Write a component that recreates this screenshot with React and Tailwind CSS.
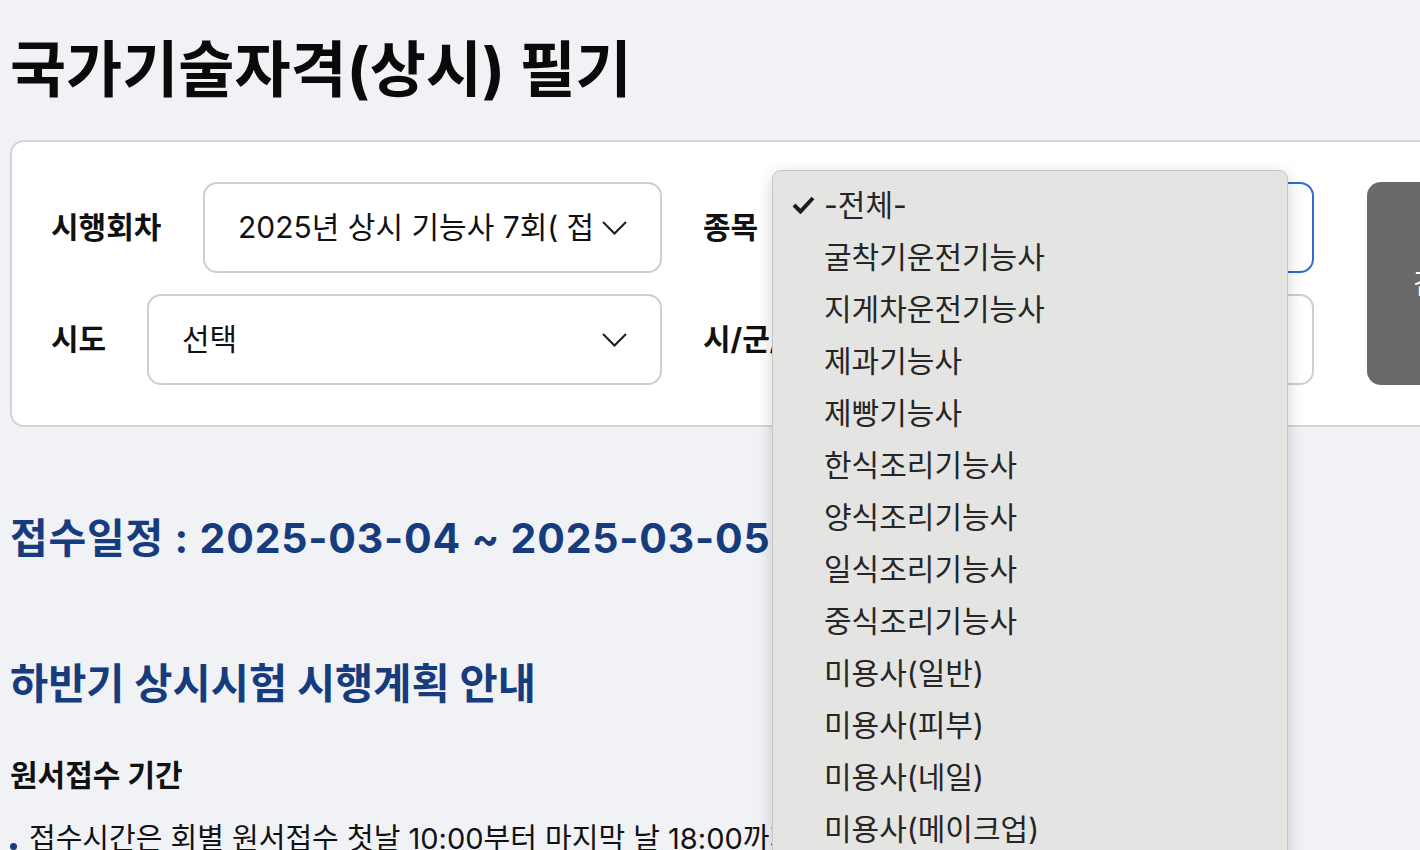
import React from 'react';

const font = { fontFamily: 'Inter, "Noto Sans CJK KR", "Noto Sans", sans-serif' };

const Chevron = () => (
  <svg width="25" height="14" viewBox="0 0 25 14" fill="none" className="shrink-0">
    <polyline points="1,1 12.5,12.5 24,1" stroke="#1a1a1a" strokeWidth="2" />
  </svg>
);

const Check = () => (
  <svg width="23" height="18" viewBox="0 0 23 18" fill="none">
    <polyline points="2,9 8.5,15.5 21,2" stroke="#1c1c1c" strokeWidth="4" strokeLinejoin="miter" />
  </svg>
);

const SelectBox = ({ value, focused }) => (
  <div
    className={`flex-1 h-[91px] flex items-center justify-between pl-[33px] pr-[33px] bg-white rounded-[14px] border-2 ${
      focused ? 'border-[#2a6ed6]' : 'border-[#cfcfcf]'
    }`}
  >
    <span className="text-[30px] text-[#111] whitespace-nowrap overflow-hidden">{value}</span>
    <Chevron />
  </div>
);

const Field = ({ label, value, focused, labelW }) => (
  <div className="w-[611px] flex items-center">
    <span className={`text-[30px] font-bold text-[#111] whitespace-nowrap ${labelW}`}>{label}</span>
    <SelectBox value={value} focused={focused} />
  </div>
);

const options = [
  '-전체-',
  '굴착기운전기능사',
  '지게차운전기능사',
  '제과기능사',
  '제빵기능사',
  '한식조리기능사',
  '양식조리기능사',
  '일식조리기능사',
  '중식조리기능사',
  '미용사(일반)',
  '미용사(피부)',
  '미용사(네일)',
  '미용사(메이크업)',
  '이용사',
];

export default function App() {
  return (
    <div className="relative w-[1420px] h-[850px] overflow-hidden bg-[#f1f2f6]" style={font}>
      <div className="pl-[10px] pt-[30px]">
        <h1 className="text-[61px] leading-[80px] font-bold text-[#0a0a0a] whitespace-nowrap">
          국가기술자격(상시) 필기
        </h1>

        <div className="mt-[30px] w-[1600px] bg-white border-2 border-[#d4d4d8] rounded-[14px] pl-[39px] py-[40px] flex items-center">
          <div className="flex flex-col gap-[21px]">
            <div className="flex gap-[41px]">
              <Field label="시행회차" value="2025년 상시 기능사 7회( 접" labelW="w-[152px] shrink-0" />
              <Field label="종목" value="-전체-" focused labelW="w-[95px] shrink-0" />
            </div>
            <div className="flex gap-[41px]">
              <Field label="시도" value="선택" labelW="w-[96px] shrink-0" />
              <Field label="시/군/구" value="선택" labelW="w-[152px] shrink-0" />
            </div>
          </div>
          <button className="ml-[53px] w-[160px] h-[203px] rounded-[14px] bg-[#696969] text-white text-[28px] pl-[46px] text-left">
            검색
          </button>
        </div>

        <h2 className="mt-[83px] text-[41px] leading-[56px] font-bold tracking-[0.8px] text-[#163c7e] whitespace-nowrap">
          접수일정 : 2025-03-04 ~ 2025-03-05
        </h2>

        <h2 className="mt-[90px] text-[41.5px] leading-[56px] font-bold text-[#163c7e] whitespace-nowrap">
          하반기 상시시험 시행계획 안내
        </h2>

        <h3 className="mt-[43px] text-[30px] leading-[40px] font-bold text-[#111] whitespace-nowrap">
          원서접수 기간
        </h3>

        <div className="mt-[24px] flex items-center gap-[12px] whitespace-nowrap">
          <span className="w-[7px] h-[7px] rounded-full bg-[#163c7e] mt-[14px]" />
          <span className="text-[29px] leading-[40px] text-[#111]">
            접수시간은 회별 원서접수 첫날 10:00부터 마지막 날 18:00까지
          </span>
        </div>
      </div>

      <div className="absolute left-[772px] top-[170px] w-[516px] h-[720px] bg-[#e4e4e3] border border-[#c6c6c6] rounded-[9px] shadow-[0_4px_16px_rgba(0,0,0,0.18)] pt-[8px]">
        {options.map((opt, i) => (
          <div key={opt} className="h-[52px] flex items-center">
            <span className="w-[51px] pl-[19px] flex items-center">{i === 0 ? <Check /> : null}</span>
            <span className="text-[30px] text-[#262626] whitespace-nowrap">{opt}</span>
          </div>
        ))}
      </div>
    </div>
  );
}
